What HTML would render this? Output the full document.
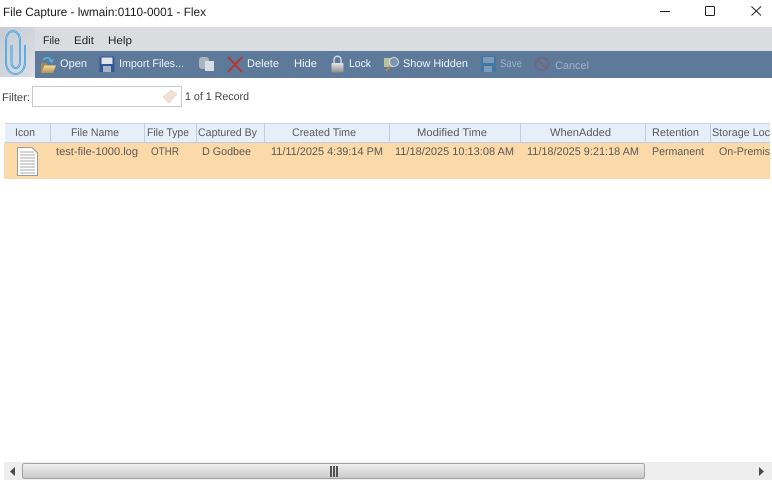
<!DOCTYPE html>
<html><head><meta charset="utf-8"><style>
html,body{margin:0;padding:0;background:#fff;width:772px;height:483px;overflow:hidden}
svg{display:block}
text{font-family:"Liberation Sans",sans-serif;font-size:11px;text-rendering:geometricPrecision}
.h,.r{fill:#5a5a5a}
.t{fill:#f2f4f7}
.d{fill:#a3b2c4}
.m{fill:#222}
</style></head><body>
<svg width="772" height="483" viewBox="0 0 772 483" xmlns="http://www.w3.org/2000/svg">
<defs>
<linearGradient id="lg" x1="0" y1="0" x2="1" y2="1"><stop offset="0" stop-color="#c6cbd3"/><stop offset="1" stop-color="#dcdfe3"/></linearGradient>
<linearGradient id="th" x1="0" y1="0" x2="0" y2="1"><stop offset="0" stop-color="#f0f0f0"/><stop offset="1" stop-color="#c8c8c8"/></linearGradient>
<linearGradient id="fo" x1="0" y1="0" x2="0" y2="1"><stop offset="0" stop-color="#f3dfa6"/><stop offset="1" stop-color="#b8914a"/></linearGradient>
<linearGradient id="lk" x1="0" y1="0" x2="0" y2="1"><stop offset="0" stop-color="#e8e8e8"/><stop offset="1" stop-color="#8e8e8e"/></linearGradient>
</defs>
<rect width="772" height="483" fill="#fff"/>
<text x="3" y="16" fill="#1a1a1a" textLength="203" lengthAdjust="spacingAndGlyphs" style="font-size:12px">File Capture - lwmain:0110-0001 - Flex</text>
<path d="M660 11.500H670" stroke="#222" stroke-width="1"/>
<rect x="705.500" y="6.500" width="9" height="9" rx="1" fill="none" stroke="#222"/>
<path d="M751.500 6.500L761 15.500M761 6.500L751.500 15.500" stroke="#222" fill="none"/>

<rect x="0" y="27" width="772" height="24" fill="#dbdce0"/>
<rect x="35" y="51" width="737" height="27" fill="#5d7a9b"/>
<rect x="0" y="27" width="35" height="50" fill="url(#lg)"/>
<path d="M11.500 45V62C11.500 70 20 70 20 62V41C20 28 6 28 6 41V62C6 78 25 78 25 62V45" fill="none" stroke="#3f9ade" stroke-width="2"/>
<path d="M11.500 45V62C11.500 70 20 70 20 62V41C20 28 6 28 6 41V62C6 78 25 78 25 62V45" fill="none" stroke="#a9daf4" stroke-width=".6"/>

<text x="43" y="44" class="m" textLength="17" lengthAdjust="spacingAndGlyphs">File</text>
<text x="74" y="44" class="m" textLength="20" lengthAdjust="spacingAndGlyphs">Edit</text>
<text x="108" y="44" class="m" textLength="24" lengthAdjust="spacingAndGlyphs">Help</text>

<!-- open -->
<path d="M41 72V63H46L48 65H53V72Z" fill="#a8884c"/>
<path d="M41 73L44.500 65.500H56L53 73Z" fill="url(#fo)"/>
<path d="M43 60C46 57 50 57 51 61" stroke="#5aaee0" stroke-width="1.800" fill="none"/>
<path d="M48.500 60.500L52 63.500L54 59Z" fill="#5aaee0"/>
<text x="60" y="67" class="t" textLength="27" lengthAdjust="spacingAndGlyphs">Open</text>
<!-- import -->
<rect x="99.500" y="56.500" width="15" height="15.500" fill="#33589a"/>
<rect x="101.500" y="57.500" width="11" height="6.500" fill="#dfe3ea"/>
<rect x="103" y="66" width="8" height="6" fill="#a9b4c6"/>
<text x="119" y="67" class="t" textLength="65" lengthAdjust="spacingAndGlyphs">Import Files...</text>
<!-- copy -->
<rect x="199" y="57" width="10" height="12" rx="3" fill="#aab5c2"/>
<rect x="205" y="61" width="9" height="10" fill="#d9dee4"/>
<!-- delete -->
<path d="M228 57L242 72M242 57L228 72" stroke="#b8342c" stroke-width="2" fill="none"/>
<text x="247" y="67" class="t" textLength="32" lengthAdjust="spacingAndGlyphs">Delete</text>
<text x="294" y="67" class="t" textLength="23" lengthAdjust="spacingAndGlyphs">Hide</text>
<!-- lock -->
<path d="M334 63V60C334 55 341 55 341 60V63" stroke="#d5d8dc" stroke-width="1.500" fill="none"/>
<rect x="331.500" y="63" width="12" height="9.500" rx="1" fill="url(#lk)"/>
<text x="349" y="67" class="t" textLength="22" lengthAdjust="spacingAndGlyphs">Lock</text>
<!-- show hidden -->
<rect x="384" y="58" width="9" height="9" fill="#b8c49c"/>
<circle cx="394" cy="62" r="4.500" fill="#7e95af" stroke="#d5dbe2"/>
<path d="M390 66L386 71" stroke="#c08a4a" stroke-width="1.500"/>
<text x="403" y="67" class="t" textLength="65" lengthAdjust="spacingAndGlyphs">Show Hidden</text>
<!-- save -->
<rect x="481" y="56" width="15" height="16" fill="#3f78a3"/>
<rect x="483" y="57" width="11" height="6" fill="#7e9ab6"/>
<rect x="484" y="66" width="8" height="6" fill="#7e9ab6"/>
<text x="500" y="67" class="d" textLength="22" lengthAdjust="spacingAndGlyphs">Save</text>
<!-- cancel -->
<circle cx="542" cy="64" r="6.500" fill="none" stroke="#75677f" stroke-width="2"/>
<path d="M537.500 59.500L546.500 68.500" stroke="#75677f" stroke-width="2"/>
<text x="555" y="69" class="d" textLength="34" lengthAdjust="spacingAndGlyphs">Cancel</text>

<!-- filter -->
<text x="2" y="101" fill="#444" textLength="28" lengthAdjust="spacingAndGlyphs">Filter:</text>
<rect x="32.500" y="86.500" width="149" height="20" fill="#fff" stroke="#c9c9c9"/>
<path d="M163 97L171 90L177 94L169 103Z" fill="#eee3d2" stroke="#dcd2c2" stroke-width=".5"/>
<text x="185" y="100" fill="#444" textLength="64" lengthAdjust="spacingAndGlyphs">1 of 1 Record</text>

<!-- header -->
<rect x="5" y="123" width="765" height="20" fill="#e6eff9"/>
<path d="M5 123.500H770" stroke="#cdd8e2"/>
<path d="M5 142.500H770" stroke="#c3d0dc"/>
<g stroke="#c0cfdc"><path d="M50.500 123V143M144.500 123V143M196.500 123V143M264.500 123V143M389.500 123V143M520.500 123V143M645.500 123V143M710.500 123V143"/></g>
<text x="15" y="136" class="h" textLength="20" lengthAdjust="spacingAndGlyphs">Icon</text>
<text x="71" y="136" class="h" textLength="48" lengthAdjust="spacingAndGlyphs">File Name</text>
<text x="147" y="136" class="h" textLength="42" lengthAdjust="spacingAndGlyphs">File Type</text>
<text x="198" y="136" class="h" textLength="59" lengthAdjust="spacingAndGlyphs">Captured By</text>
<text x="292" y="136" class="h" textLength="64" lengthAdjust="spacingAndGlyphs">Created Time</text>
<text x="417" y="136" class="h" textLength="70" lengthAdjust="spacingAndGlyphs">Modified Time</text>
<text x="550" y="136" class="h" textLength="61" lengthAdjust="spacingAndGlyphs">WhenAdded</text>
<text x="652" y="136" class="h" textLength="47" lengthAdjust="spacingAndGlyphs">Retention</text>
<text x="712" y="136" class="h" textLength="58" lengthAdjust="spacingAndGlyphs">Storage Loc</text>

<!-- row -->
<rect x="4" y="143" width="766" height="36" fill="#fbd9a8"/>
<path d="M17.500 147.500H32L37.500 153V175.500H17.500Z" fill="#fff" stroke="#9a9a9a"/>
<path d="M20 152H34M20 155H35M20 158H35M20 161H35M20 164H35M20 167H35M20 170H35M20 173H35" stroke="#a8a8a8"/>
<text x="56" y="155" class="r" textLength="82" lengthAdjust="spacingAndGlyphs">test-file-1000.log</text>
<text x="151" y="155" class="r" textLength="28" lengthAdjust="spacingAndGlyphs">OTHR</text>
<text x="202" y="155" class="r" textLength="49" lengthAdjust="spacingAndGlyphs">D Godbee</text>
<text x="271" y="155" class="r" textLength="112" lengthAdjust="spacingAndGlyphs">11/11/2025 4:39:14 PM</text>
<text x="395" y="155" class="r" textLength="119" lengthAdjust="spacingAndGlyphs">11/18/2025 10:13:08 AM</text>
<text x="527" y="155" class="r" textLength="112" lengthAdjust="spacingAndGlyphs">11/18/2025 9:21:18 AM</text>
<text x="652" y="155" class="r" textLength="52" lengthAdjust="spacingAndGlyphs">Permanent</text>
<text x="719" y="155" class="r" textLength="51" lengthAdjust="spacingAndGlyphs">On-Premis</text>

<!-- scrollbar -->
<rect x="4" y="462" width="768" height="18" fill="#eeeeee"/>
<path d="M15 467V476L10 471.500Z" fill="#4a4a4a"/>
<path d="M759 467V476L764 471.500Z" fill="#4a4a4a"/>
<rect x="22.500" y="463.500" width="622" height="15" rx="2" fill="url(#th)" stroke="#a2a2a2"/>
<path d="M331 466V477M334 466V477M337 466V477" stroke="#555" stroke-width="2"/>
</svg>
</body></html>
